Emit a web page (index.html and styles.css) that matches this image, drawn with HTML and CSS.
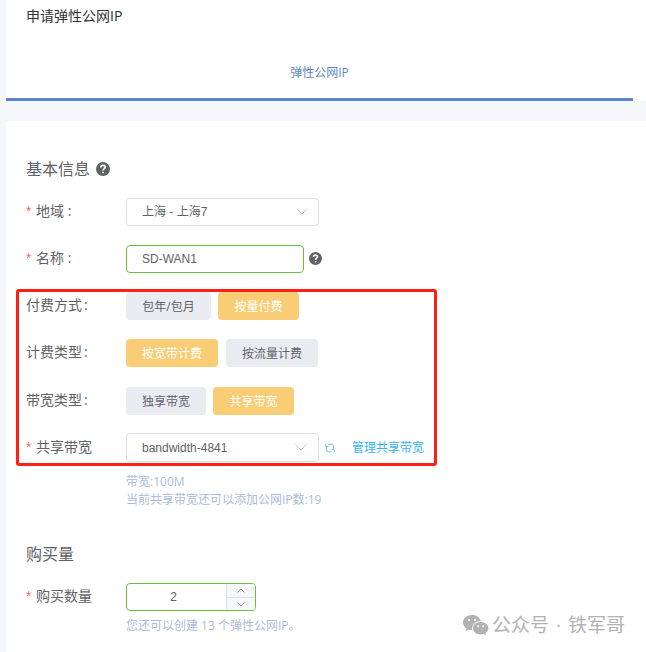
FILE: index.html
```html
<!DOCTYPE html>
<html lang="zh-CN">
<head>
<meta charset="utf-8">
<title>申请弹性公网IP</title>
<link rel="stylesheet" href="styles.css">
</head>
<body>
<header class="top">
  <h1 class="title">申请弹性公网IP</h1>
  <nav class="tabs"><span class="tab">弹性公网IP</span></nav>
</header>
<main class="panel">
  <h2 class="heading">基本信息
    <svg class="help" width="14" height="14" viewBox="0 0 14 14"><circle cx="7" cy="7" r="7" fill="#606266"/><path d="M4.9 5.4C4.9 2.6 9.2 2.7 9.2 5.2C9.2 6.7 7.1 6.7 7.1 8.4M7.1 9.7V11.3" fill="none" stroke="#fff" stroke-width="1.7"/></svg>
  </h2>
  <div class="row">
    <label class="label"><i class="req">*</i>地域 :</label>
    <div class="field select"><span>上海 - 上海7</span><svg class="chev" width="10" height="6" viewBox="0 0 10 6"><path d="M.5 .5L5 5L9.5 .5"/></svg></div>
  </div>
  <div class="row">
    <label class="label"><i class="req">*</i>名称 :</label>
    <div class="field name">SD-WAN1</div>
    <svg class="help side" width="13" height="13" viewBox="0 0 14 14"><circle cx="7" cy="7" r="7" fill="#606266"/><path d="M4.9 5.4C4.9 2.6 9.2 2.7 9.2 5.2C9.2 6.7 7.1 6.7 7.1 8.4M7.1 9.7V11.3" fill="none" stroke="#fff" stroke-width="1.7"/></svg>
  </div>
  <div class="row">
    <label class="label plain">付费方式<span class="colon">:</span></label>
    <div class="options"><button class="opt wide">包年/包月</button><button class="opt on paid">按量付费</button></div>
  </div>
  <div class="row later">
    <label class="label plain">计费类型<span class="colon">:</span></label>
    <div class="options loose"><button class="opt on">按宽带计费</button><button class="opt">按流量计费</button></div>
  </div>
  <div class="row share-row">
    <label class="label plain">带宽类型<span class="colon">:</span></label>
    <div class="options"><button class="opt">独享带宽</button><button class="opt on paid">共享带宽</button></div>
  </div>
  <div class="row tall">
    <label class="label"><i class="req">*</i>共享带宽</label>
    <div class="field select"><span>bandwidth-4841</span><svg class="chev" width="12" height="7" viewBox="0 0 12 7"><path d="M.5 .5L6 6L11.5 .5"/></svg></div>
    <svg class="refresh" width="10" height="10" viewBox="0 0 10 10"><path d="M3.2 1.2H6.2Q8.7 1.2 8.7 3.8V6.2M6.8 8.8H3.8Q1.3 8.8 1.3 6.2V3.8M.8 .8V3.4H3.4M9.2 9.2V6.6H6.6"/></svg>
    <a class="link">管理共享带宽</a>
  </div>
  <div class="hints"><p>带宽:100M</p><p>当前共享带宽还可以添加公网IP数:19</p></div>
  <h2 class="heading second">购买量</h2>
  <div class="row count">
    <label class="label"><i class="req">*</i>购买数量</label>
    <div class="number"><span class="value">2</span>
      <div class="steps">
        <span class="step"><svg width="8" height="5" viewBox="0 0 8 5"><path d="M.5 4.5L4 1L7.5 4.5"/></svg></span>
        <span class="step down"><svg width="8" height="5" viewBox="0 0 8 5"><path d="M.5 .5L4 4L7.5 .5"/></svg></span>
      </div>
    </div>
  </div>
  <div class="hints last"><p>您还可以创建 13 个弹性公网IP。</p></div>
</main>
<div class="highlight"></div>
<div class="watermark">
  <svg width="26" height="21" viewBox="0 0 26 21"><path fill="#b2b2b2" d="M9 0C4 0 0 3.3 0 7.5C0 9.9 1.3 12 3.3 13.3L2.5 16L5.7 14.4C6.8 14.8 8 15 9.3 14.9C8.2 10.2 12.5 6 17.8 6.1C17 2.6 13.4 0 9 0Z"/><path fill="#b2b2b2" d="M17.7 7C13.3 7 10 9.8 10 13.2C10 16.7 13.3 19.4 17.7 19.4C18.7 19.4 19.7 19.2 20.6 18.9L23.1 20.3L22.4 17.9C24.2 16.8 25.4 15.1 25.4 13.2C25.4 9.8 22 7 17.7 7Z"/><g fill="#fff"><circle cx="6" cy="5.2" r="1.1"/><circle cx="12" cy="5.2" r="1.1"/><circle cx="15.1" cy="11.3" r="1"/><circle cx="20.2" cy="11.3" r="1"/></g></svg>
  <span>公众号</span><span class="dot">·</span><span>铁军哥</span>
</div>
</body>
</html>
```
FILE: styles.css
```css
* { box-sizing: border-box; }
body {
  margin: 0;
  padding-left: 6px;
  height: 652px;
  overflow: hidden;
  background: #f6f7fb;
  color: #606266;
  font: 12px/18px "Open Sans", "Noto Sans CJK SC", sans-serif;
}
h1, h2, p { margin: 0; font-weight: 400; }
.top { height: 101px; background: #fff; }
.title {
  height: 44px;
  padding: 6px 0 0 20px;
  color: #303133;
  font-size: 14px;
  line-height: 20px;
}
.tabs {
  display: flex;
  justify-content: center;
  width: 627px;
  height: 57px;
  padding-top: 20px;
  border-bottom: 3px solid #5b87ca;
  color: #5b87ca;
}
.panel { height: 531px; margin-top: 20px; padding: 36px 0 0 20px; background: #fff; }
.heading { display: flex; align-items: center; height: 24px; gap: 6px; font-size: 16px; line-height: 24px; }
.help { flex: none; }
.row { display: flex; align-items: center; height: 28px; margin-bottom: 19px; }
.heading + .row { margin-top: 17px; }
.label { width: 100px; flex: none; font-size: 14px; line-height: 20px; padding-bottom: 2px; }
.req { display: inline-block; width: 10px; color: #f56c6c; font-style: normal; font-family: "Liberation Sans", sans-serif; }
.colon { margin-left: 2px; }
.field {
  display: flex;
  align-items: center;
  height: 28px;
  padding: 0 11px 0 15px;
  border: 1px solid #dcdfe6;
  border-radius: 4px;
  font-family: "Liberation Sans", "Noto Sans CJK SC", sans-serif;
}
.select { width: 193px; justify-content: space-between; }
.name { width: 178px; border-color: #67c23a; }
.side { margin: -2px 0 0 5px; }
.chev, .refresh, .step svg { fill: none; stroke: #c0c4cc; }
.options { display: flex; gap: 7px; }
.loose { gap: 8px; }
.opt {
  height: 28px;
  padding: 1px 16px 0;
  border: 0;
  border-radius: 4px;
  background: #ebecf2;
  color: #606266;
  font: inherit;
}
.opt.on { background: #f9cd76; color: #fff; }
.wide { width: 85px; }
.paid { width: 81px; }
.later { margin-bottom: 20px; }
.share-row { margin-bottom: 18px; }
.tall { height: 29px; margin-bottom: 0; }
.tall .field { height: 29px; }
.refresh { margin-left: 6px; stroke: #72b9e8; }
.link { margin-left: 17px; padding-top: 1px; color: #37b6f0; }
.hints { margin: 11px 0 0 100px; color: #aabcda; }
.second { margin-top: 33px; }
.count { margin-bottom: 0; }
.number {
  display: flex;
  width: 130px;
  height: 28px;
  border: 1px solid #67c23a;
  border-radius: 4px;
  overflow: hidden;
}
.value { width: 99px; padding-right: 6px; text-align: center; line-height: 26px; font-family: "Liberation Sans", sans-serif; }
.steps { flex: 1; border-left: 1px solid #dcdfe6; background: #f5f7fa; }
.step { display: flex; height: 13px; align-items: center; justify-content: center; }
.step svg { stroke: #a3a6ac; }
.down { border-top: 1px solid #dcdfe6; }
.last { margin-top: 6px; }
.highlight {
  position: absolute;
  left: 16px;
  top: 289px;
  width: 421px;
  height: 177px;
  border: 3px solid #ff1f13;
  border-radius: 3px;
}
.watermark {
  position: absolute;
  left: 463px;
  top: 611px;
  display: flex;
  align-items: center;
  height: 28px;
  color: #b2b2b2;
  font-size: 19px;
  line-height: 28px;
}
.watermark svg { margin: 1px 3px 0 0; }
.dot { width: 19px; text-align: center; }
```
